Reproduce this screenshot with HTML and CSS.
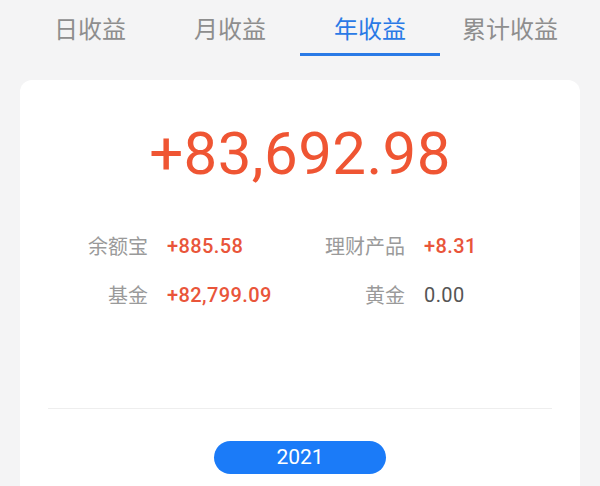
FILE: index.html
```html
<!DOCTYPE html>
<html lang="zh-CN">
<head>
<meta charset="utf-8">
<title>年收益</title>
<link rel="stylesheet" href="styles.css">
</head>
<body>
  <nav class="tabs">
    <div class="tab">日收益</div>
    <div class="tab">月收益</div>
    <div class="tab active">年收益</div>
    <div class="tab">累计收益</div>
  </nav>
  <main class="card">
    <div class="total">+83,692.98</div>
    <div class="grid">
      <span class="label">余额宝</span><span class="value up">+885.58</span>
      <span class="label">理财产品</span><span class="value up">+8.31</span>
      <span class="label">基金</span><span class="value up">+82,799.09</span>
      <span class="label">黄金</span><span class="value zero">0.00</span>
    </div>
    <hr class="divider">
    <div class="year-wrap"><div class="year">2021</div></div>
  </main>
</body>
</html>
```

FILE: styles.css
```css
* { box-sizing: border-box; }
html, body { margin: 0; padding: 0; }
body {
  width: 600px;
  height: 486px;
  overflow: hidden;
  background: #f4f4f5;
  font-family: "Noto Sans CJK SC", "Noto Sans", sans-serif;
}
.tabs {
  display: flex;
  padding: 0 20px;
}
.tab {
  width: 140px;
  height: 56px;
  padding-top: 11px;
  line-height: 34px;
  font-size: 24px;
  text-align: center;
  color: #8e8e8e;
  border-bottom: 3px solid transparent;
}
.tab.active {
  color: #2a7ae6;
  border-bottom-color: #2a7ae6;
}
.card {
  margin: 24px 20px 0;
  background: #ffffff;
  border-radius: 12px;
  padding-top: 39px;
  height: 430px;
}
.total {
  font-family: Roboto, "Liberation Sans", sans-serif;
  font-size: 60px;
  line-height: 70px;
  height: 70px;
  text-align: center;
  color: #ef5533;
  letter-spacing: 0.4px;
}
.grid {
  margin-top: 42px;
  display: grid;
  grid-template-columns: 128px 120px 99px auto;
  column-gap: 19px;
  row-gap: 19px;
  line-height: 30px;
}
.label {
  text-align: right;
  font-size: 20px;
  color: #9a9a9a;
}
.value {
  font-family: Roboto, "Liberation Sans", sans-serif;
  font-size: 20px;
  font-weight: 500;
  letter-spacing: 0.4px;
}
.value.up { color: #e9553a; }
.value.zero { color: #555555; font-weight: 400; }
.divider {
  margin: 98px 28px 0;
  border: 0;
  height: 1px;
  background: #eeeeee;
}
.year-wrap {
  display: flex;
  justify-content: center;
  margin-top: 32px;
}
.year {
  width: 172px;
  height: 33px;
  border-radius: 17px;
  background: #1b7bf8;
  color: #ffffff;
  font-family: Roboto, "Liberation Sans", sans-serif;
  font-size: 21px;
  line-height: 33px;
  text-align: center;
}
```
